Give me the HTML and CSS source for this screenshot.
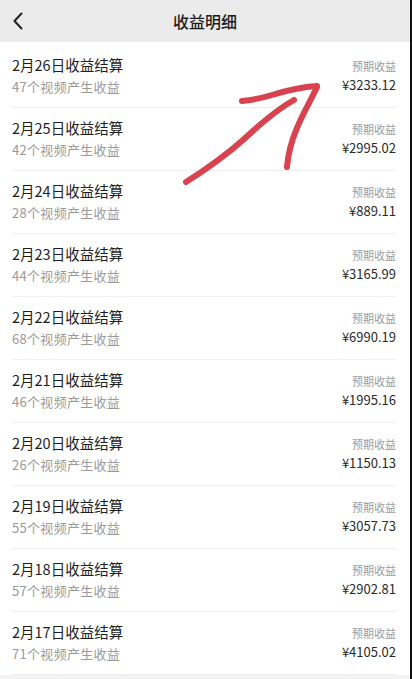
FILE: index.html
```html
<!DOCTYPE html>
<html lang="zh">
<head>
<meta charset="utf-8">
<title>收益明细</title>
<link rel="stylesheet" href="styles.css">
</head>
<body>
<div class="app">
  <header class="bar">
    <svg class="back" width="12" height="18" viewBox="0 0 12 18"><path d="M9.5 1.5 L2.5 9 L9.5 16.5" fill="none" stroke="#222" stroke-width="2" stroke-linecap="round" stroke-linejoin="round"/></svg>
    <h1 class="bar-title">收益明细</h1>
  </header>
  <main class="list">
    <div class="row"><div class="left"><div class="t">2月26日收益结算</div><div class="s">47个视频产生收益</div></div><div class="right"><div class="l">预期收益</div><div class="a">¥3233.12</div></div></div>
    <div class="row"><div class="left"><div class="t">2月25日收益结算</div><div class="s">42个视频产生收益</div></div><div class="right"><div class="l">预期收益</div><div class="a">¥2995.02</div></div></div>
    <div class="row"><div class="left"><div class="t">2月24日收益结算</div><div class="s">28个视频产生收益</div></div><div class="right"><div class="l">预期收益</div><div class="a">¥889.11</div></div></div>
    <div class="row"><div class="left"><div class="t">2月23日收益结算</div><div class="s">44个视频产生收益</div></div><div class="right"><div class="l">预期收益</div><div class="a">¥3165.99</div></div></div>
    <div class="row"><div class="left"><div class="t">2月22日收益结算</div><div class="s">68个视频产生收益</div></div><div class="right"><div class="l">预期收益</div><div class="a">¥6990.19</div></div></div>
    <div class="row"><div class="left"><div class="t">2月21日收益结算</div><div class="s">46个视频产生收益</div></div><div class="right"><div class="l">预期收益</div><div class="a">¥1995.16</div></div></div>
    <div class="row"><div class="left"><div class="t">2月20日收益结算</div><div class="s">26个视频产生收益</div></div><div class="right"><div class="l">预期收益</div><div class="a">¥1150.13</div></div></div>
    <div class="row"><div class="left"><div class="t">2月19日收益结算</div><div class="s">55个视频产生收益</div></div><div class="right"><div class="l">预期收益</div><div class="a">¥3057.73</div></div></div>
    <div class="row"><div class="left"><div class="t">2月18日收益结算</div><div class="s">57个视频产生收益</div></div><div class="right"><div class="l">预期收益</div><div class="a">¥2902.81</div></div></div>
    <div class="row"><div class="left"><div class="t">2月17日收益结算</div><div class="s">71个视频产生收益</div></div><div class="right"><div class="l">预期收益</div><div class="a">¥4105.02</div></div></div>
  </main>
  <svg class="arrow" width="412" height="679" viewBox="0 0 412 679">
    <g fill="none" stroke="#d9434f" stroke-width="6" stroke-linecap="round" stroke-linejoin="round">
      <path d="M186 182 C205 170 225 156 243 140 C260 124 276 110 294 100"/>
      <path d="M242 101 C252 100 262 98 272 95 C288 90 302 87 317 86"/>
      <path d="M317 87 C311 100 303 113 297 128 C291 142 288 155 287 167"/>
    </g>
  </svg>
</div>
</body>
</html>
```
FILE: styles.css
```css
html, body {
  margin: 0;
  padding: 0;
}
body {
  width: 412px;
  height: 679px;
  overflow: hidden;
  background: #f3f3f3;
  font-family: "Noto Sans CJK SC", "Noto Sans", sans-serif;
}
.app {
  position: relative;
  width: 410px;
  height: 679px;
  border-right: 2px solid #111;
  background: #f3f3f3;
}
.bar {
  height: 42px;
  background: #ebebeb;
  display: flex;
  align-items: center;
  justify-content: center;
  position: relative;
}
.back {
  position: absolute;
  left: 12px;
  top: 12px;
}
.bar-title {
  margin: 0;
  font-size: 16px;
  font-weight: 500;
  color: #1c1c1c;
  line-height: 24px;
}
.list {
  background: #fff;
  padding-top: 3px;
}
.row {
  height: 62px;
  margin: 0 14px 0 12px;
  border-bottom: 1px solid #efefef;
  display: flex;
  justify-content: space-between;
  align-items: center;
}
.left {
  display: flex;
  flex-direction: column;
  gap: 2px;
}
.t {
  font-size: 14.5px;
  line-height: 20px;
  color: #1e1e1e;
}
.s {
  font-size: 13px;
  line-height: 20px;
  letter-spacing: 0.3px;
  color: #9a9a9a;
}
.right {
  display: flex;
  flex-direction: column;
  align-items: flex-end;
  gap: 2px;
}
.l {
  font-size: 11px;
  line-height: 16px;
  color: #9c9c9c;
}
.a {
  font-size: 13px;
  line-height: 18px;
  color: #2a2a2a;
}
.arrow {
  position: absolute;
  left: 0;
  top: 0;
  pointer-events: none;
}
```
